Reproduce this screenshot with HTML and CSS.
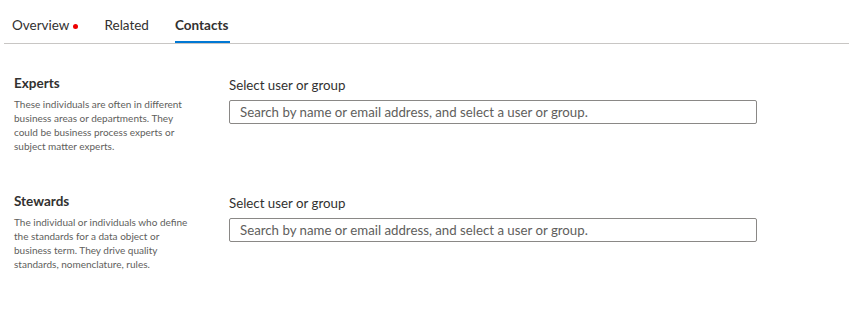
FILE: index.html
```html
<!DOCTYPE html>
<html lang="en">
<head>
    <meta charset="UTF-8">
    <title>Contacts</title>
    <link rel="stylesheet" href="styles.css">
</head>
<body>
    <div class="tabs">
        <div class="tab">Overview<span class="dot"></span></div>
        <div class="tab">Related</div>
        <div class="tab active">Contacts</div>
    </div>

    <div class="section">
        <div class="info">
            <div class="info-title">Experts</div>
            <div class="info-desc">These individuals are often in different business areas or departments. They could be business process experts or subject matter experts.</div>
        </div>
        <div class="field">
            <label class="field-label">Select user or group</label>
            <input class="field-input" type="text" placeholder="Search by name or email address, and select a user or group.">
        </div>
    </div>

    <div class="section">
        <div class="info">
            <div class="info-title">Stewards</div>
            <div class="info-desc">The individual or individuals who define the standards for a data object or business term. They drive quality standards, nomenclature, rules.</div>
        </div>
        <div class="field">
            <label class="field-label">Select user or group</label>
            <input class="field-input" type="text" placeholder="Search by name or email address, and select a user or group.">
        </div>
    </div>
</body>
</html>
```

FILE: styles.css
```css
:root {
    --text-color: #323130;
    --muted-color: #605e5c;
    --accent: #0078d4;
    --line: #c8c6c4;
}

body {
    margin: 0;
    padding: 0;
    font-family: 'Lato', 'Open Sans', sans-serif;
    color: var(--text-color);
    background: #fff;
}

/* 标签栏 */
.tabs {
    display: flex;
    gap: 26px;
    margin-left: 4px;
    padding-left: 8px;
    border-bottom: 1px solid var(--line);
    height: 44px;
    box-sizing: border-box;
}

.tab {
    font-size: 13.5px;
    line-height: 20px;
    padding-top: 15px;
    position: relative;
    display: flex;
    align-items: flex-start;
}

.tab.active {
    font-weight: 700;
    padding-right: 2px;
}

.tab.active::after {
    content: "";
    position: absolute;
    left: 0;
    right: 0;
    bottom: 0;
    height: 2px;
    background: var(--accent);
}

.dot {
    width: 5px;
    height: 5px;
    border-radius: 50%;
    background: #e00;
    margin: 9px 0 0 4px;
}

/* 内容区 */
.section {
    display: flex;
    padding: 0 14px;
    margin-top: 29px;
}

.section + .section {
    margin-top: 38px;
}

.info {
    width: 180px;
    flex-shrink: 0;
    margin-right: 35px;
}

.info-title {
    font-size: 13.5px;
    font-weight: 700;
    line-height: 20px;
}

.info-desc {
    font-size: 10px;
    line-height: 14px;
    color: var(--muted-color);
    margin-top: 4px;
}

.field {
    display: flex;
    flex-direction: column;
    width: 528px;
}

.field-label {
    font-size: 13.3px;
    line-height: 20px;
    margin-top: 2px;
    color: var(--text-color);
}

.field-input {
    margin-top: 5px;
    height: 24px;
    box-sizing: border-box;
    border: 1px solid #8a8886;
    border-radius: 2px;
    padding: 0 10px;
    font-family: inherit;
    font-size: 13.25px;
    color: var(--text-color);
}

.field-input::placeholder {
    color: var(--muted-color);
}
```
